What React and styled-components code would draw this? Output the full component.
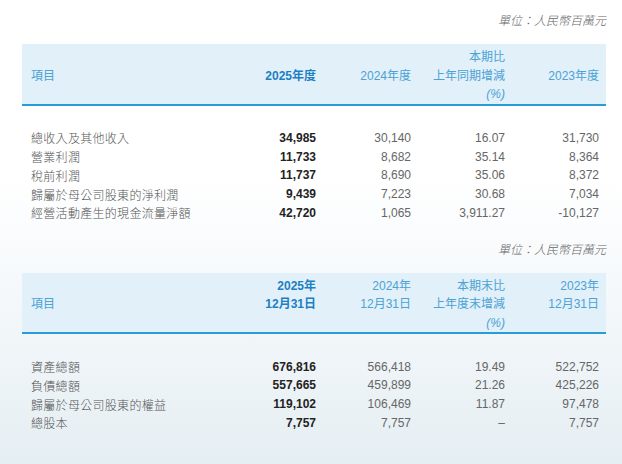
import React from "react";
import styled, { createGlobalStyle } from "styled-components";

const Global = createGlobalStyle`
  html, body { margin: 0; padding: 0; }
  body {
    background: linear-gradient(to bottom, #ffffff 0%, #ffffff 38%, #f1f6f9 72%, #e5eef3 100%);
    min-height: 100vh;
    font-family: "Liberation Sans", "Noto Sans CJK TC", Arial, sans-serif;
  }
`;

const Page = styled.div`
  width: 622px;
  height: 464px;
  box-sizing: border-box;
  padding: 11px 16px 0 22px;
  overflow: hidden;
`;

const Unit = styled.div`
  text-align: right;
  font-size: 12px;
  line-height: 18px;
  font-style: italic;
  color: #666;
  font-family: "Noto Sans CJK TC", "Liberation Sans", sans-serif;
  font-weight: 300;
  margin-top: ${(p) => p.$top || 0}px;
`;

const Section = styled.section`
  margin-top: 15px;
`;

const cols = "1fr 95px 95px 94px 94px";

const Head = styled.div`
  display: grid;
  grid-template-columns: ${cols};
  background: #e2f0f9;
  border-bottom: 2px solid #2b9bd7;
  padding: 4px 7px 0 9px;
`;

const HeadCell = styled.div`
  display: flex;
  flex-direction: column;
  align-items: ${(p) => (p.$left ? "flex-start" : "flex-end")};
  padding-top: ${(p) => (p.$skip || 0) * 18.5}px;
  height: 55.5px;
  box-sizing: border-box;
  font-size: 12px;
  line-height: 18.5px;
  color: ${(p) => (p.$bold ? "#1b7fc3" : "#4aa2d5")};
  font-weight: ${(p) => (p.$bold ? 700 : 400)};
  font-family: "Liberation Sans", "Noto Sans CJK TC", sans-serif;
  white-space: nowrap;
`;

const Pct = styled.span`
  font-style: italic;
`;

const Body = styled.div`
  padding: 23px 7px 0 9px;
`;

const Row = styled.div`
  display: grid;
  grid-template-columns: ${cols};
  height: 18.75px;
  align-items: center;
  font-size: 12px;
`;

const Label = styled.div`
  color: #555;
  font-family: "Noto Sans CJK TC", "Liberation Sans", sans-serif;
  font-weight: 300;
  letter-spacing: 0.3px;
  white-space: nowrap;
`;

const Num = styled.div`
  text-align: right;
  color: ${(p) => (p.$bold ? "#222" : "#666")};
  font-weight: ${(p) => (p.$bold ? 700 : 400)};
  font-family: "Liberation Sans", Arial, sans-serif;
`;

function Table({ head, rows }) {
  return (
    <Section>
      <Head>
        {head.map((h, i) => (
          <HeadCell key={i} $left={i === 0} $bold={i === 1} $skip={h.skip}>
            {h.lines.map((l, j) =>
              l === "(%)" ? <Pct key={j}>(%)</Pct> : <span key={j}>{l}</span>
            )}
          </HeadCell>
        ))}
      </Head>
      <Body>
        {rows.map((r, i) => (
          <Row key={i}>
            <Label>{r[0]}</Label>
            {r.slice(1).map((v, j) => (
              <Num key={j} $bold={j === 0}>
                {v}
              </Num>
            ))}
          </Row>
        ))}
      </Body>
    </Section>
  );
}

const head1 = [
  { lines: ["項目"], skip: 1 },
  { lines: ["2025年度"], skip: 1 },
  { lines: ["2024年度"], skip: 1 },
  { lines: ["本期比", "上年同期增減", "(%)"], skip: 0 },
  { lines: ["2023年度"], skip: 1 },
];

const rows1 = [
  ["總收入及其他收入", "34,985", "30,140", "16.07", "31,730"],
  ["營業利潤", "11,733", "8,682", "35.14", "8,364"],
  ["稅前利潤", "11,737", "8,690", "35.06", "8,372"],
  ["歸屬於母公司股東的淨利潤", "9,439", "7,223", "30.68", "7,034"],
  ["經營活動產生的現金流量淨額", "42,720", "1,065", "3,911.27", "-10,127"],
];

const head2 = [
  { lines: ["項目"], skip: 1 },
  { lines: ["2025年", "12月31日"], skip: 0 },
  { lines: ["2024年", "12月31日"], skip: 0 },
  { lines: ["本期末比", "上年度末增減", "(%)"], skip: 0 },
  { lines: ["2023年", "12月31日"], skip: 0 },
];

const rows2 = [
  ["資產總額", "676,816", "566,418", "19.49", "522,752"],
  ["負債總額", "557,665", "459,899", "21.26", "425,226"],
  ["歸屬於母公司股東的權益", "119,102", "106,469", "11.87", "97,478"],
  ["總股本", "7,757", "7,757", "–", "7,757"],
];

export default function App() {
  return (
    <>
      <Global />
      <Page>
        <Unit>單位：人民幣百萬元</Unit>
        <Table head={head1} rows={rows1} />
        <Unit $top={17.6}>單位：人民幣百萬元</Unit>
        <Table head={head2} rows={rows2} />
      </Page>
    </>
  );
}
